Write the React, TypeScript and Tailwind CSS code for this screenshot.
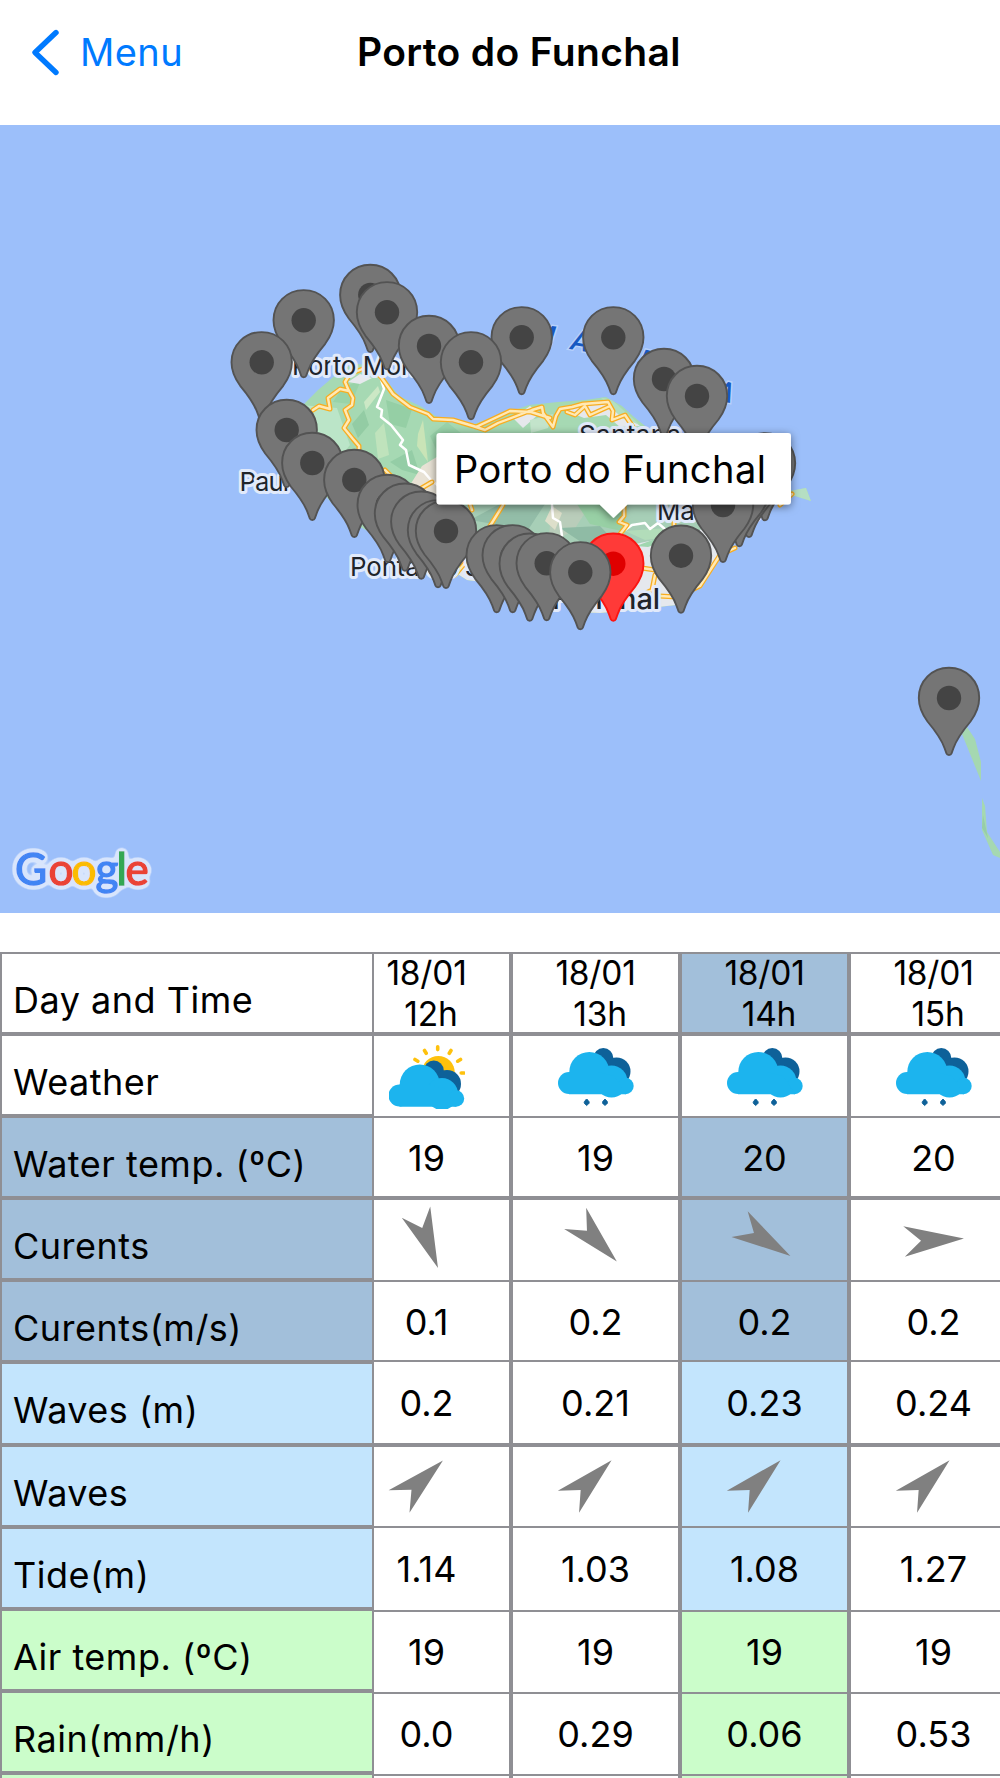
import { clsx } from "clsx";

type Sky = "sun" | "rain";

interface Hour {
  day: string;
  time: string;
  sky: Sky;
  water: string;
  currentDir: number;
  current: string;
  wave: string;
  waveDir: number;
  tide: string;
  air: string;
  rain: string;
  active?: boolean;
}

const hours: Hour[] = [
  { day: "18/01", time: "12h", sky: "sun", water: "19", currentDir: 68.5, current: "0.1", wave: "0.2", waveDir: -43, tide: "1.14", air: "19", rain: "0.0" },
  { day: "18/01", time: "13h", sky: "rain", water: "19", currentDir: 46, current: "0.2", wave: "0.21", waveDir: -44, tide: "1.03", air: "19", rain: "0.29" },
  { day: "18/01", time: "14h", sky: "rain", water: "20", currentDir: 32, current: "0.2", wave: "0.23", waveDir: -44, tide: "1.08", air: "19", rain: "0.06", active: true },
  { day: "18/01", time: "15h", sky: "rain", water: "20", currentDir: -3, current: "0.2", wave: "0.24", waveDir: -44, tide: "1.27", air: "19", rain: "0.53" },
];

const labels = [
  { text: "Day and Time", tone: "bg-white" },
  { text: "Weather", tone: "bg-white" },
  { text: "Water temp. (ºC)", tone: "bg-[#a2bfda]" },
  { text: "Curents", tone: "bg-[#a2bfda]" },
  { text: "Curents(m/s)", tone: "bg-[#a2bfda]" },
  { text: "Waves (m)", tone: "bg-[#c3e5fd]" },
  { text: "Waves", tone: "bg-[#c3e5fd]" },
  { text: "Tide(m)", tone: "bg-[#c3e5fd]" },
  { text: "Air temp. (ºC)", tone: "bg-[#cbfdca]" },
  { text: "Rain(mm/h)", tone: "bg-[#cbfdca]" },
  { text: "", tone: "bg-[#cbfdca]" },
];

// map coordinates of every spot, northernmost first so southern pins overlap them
const pins = [
  [370.3, 295], [387, 312.3], [303.7, 320.3], [521.7, 337.3], [613.3, 337.3],
  [429, 346], [261.7, 362.3], [471, 362.3], [664, 379], [697, 396],
  [286.7, 430], [312.3, 463], [765, 463.3], [354.3, 480], [749, 480], [739.3, 489.3],
  [387.7, 505], [723, 505], [405, 513.7], [421.3, 521.7], [438, 530.3],
  [446, 531], [496.7, 555.3], [512.7, 555.3], [681, 555.7], [529.7, 563.7],
  [546.7, 563.3], [613.3, 563.7], [580.3, 572.3], [949, 698],
];

const Pin = ({ x, y }: { x: number; y: number }) => {
  const selected = x === 613.3 && y === 563.7;
  return (
    <g transform={`translate(${x} ${y})`}>
      <path
        d="M0 -30.2C-17 -30.2 -30.2 -17 -30.2 0C-30.2 9 -27 16 -21.500 23.500C-13.500 33 -8 40 -4.500 50L-2.500 55.500C-1.800 57.500 1.800 57.500 2.500 55.500L4.500 50C8 40 13.500 33 21.500 23.500C27 16 30.2 9 30.2 0C30.2 -17 17 -30.2 0 -30.2Z"
        fill={selected ? "#ff3a38" : "#757575"}
        stroke={selected ? "#fb1512" : "#535353"}
        strokeWidth="1.9"
      />
      <circle r="12.2" fill={selected ? "#df0000" : "#444"} />
    </g>
  );
};

const LAND =
  "M304 404L318 390L338 373L352 364L374 365L384 377L399 396L422 407L445 422L471 425L500 415L529 405L558 402L585 400L606 397L622 406L634 417L660 438L700 455L760 475L790 491L806 488L811 501L795 496L778 500L750 521L728 545L704 582L688 595L676 605L640 609L600 613L578 612L562 601L550 609L522 594L490 583L467 580L445 566L395 545L362 528L332 503L313 483L290 440Z";

const ROADS = [
  "M313 410L319 406L330 409L328 398L340 389L349 391L345 382L350 374L370 366L381 377L393 394L410 407L428 414L433 419L453 420L473 426L485 430L498 423L532 410L542 407L543 413L553 427L556 416L560 409L572 407L583 404L608 402L613 411L612 420L625 415L633 427",
  "M347 387L353 398L352 405L345 410L349 420L344 428L353 439L359 446L359 455",
  "M476 427L510 411L531 412L550 418M567 412L575 415L585 406L590 415L610 406",
  "M385 470L395 480M415 492L432 482M503 505L490 526L482 552M470 504L472 510M624 505L624 516L619 522L627 525L620 534L612 552M617 580L627 572L635 575L642 568L655 570M655 575L652 590L642 595L677 597L700 586L720 555L735 548M674 510L674 526M792 494L780 505M455 575L465 563",
].join("");

const MapIsland = () => (
  <>
    <clipPath id="land">
      <path d={LAND} />
    </clipPath>
    <path d={LAND} fill="#a6d9b3" />
    <g clipPath="url(#land)">
      <path d="M300 405L337 408L350 445L330 470L290 440Z" fill="#bbe5c8" />
      <path d="M342 388L361 380L351 404L333 402Z" fill="#99d3a8" />
      <path d="M352 424L364 410L369 425L358 438Z" fill="#93cca4" />
      <path d="M386 400L412 409L406 428L390 424Z" fill="#95cfa5" />
      <path d="M364 402L378 386L380 392L366 410Z" fill="#cce8c5" />
      <path d="M375 433L384 423L389 455L378 459Z" fill="#bfe3bc" />
      <path d="M418 434L423 420L428 462L417 446Z" fill="#c9e4b7" />
      <path d="M390 462L412 450L420 475L402 470Z" fill="#94cda6" />
      <path d="M430 436L447 422L462 434L441 460Z" fill="#98d2a9" />
      <path d="M410 485L422 466L440 455V500L412 483Z" fill="#e8e2d5" />
      <path d="M348 382L360 374L372 378L360 384Z" fill="#e7e9ee" />
      <path d="M513 418L530 406L540 413L523 428Z" fill="#e6e8ec" />
      <path d="M530 420L553 414L548 428L531 433Z" fill="#c3e4cb" />
      <path d="M564 410L610 402L640 426L620 427L606 415L584 418Z" fill="#e6e8ec" />
      <path d="M600 397L612 400L640 425L622 418Z" fill="#b2dfc0" />
      <path d="M436 500H795V620H436Z" fill="#a7cfb7" />
      <path d="M470 520L500 504H545L528 530L500 525Z" fill="#93bda8" />
      <path d="M552 505L590 505L574 530L548 545Z" fill="#b9cdba" />
      <path d="M577 504H624L626 532L590 524Z" fill="#98d0a5" />
      <path d="M560 528L600 526L618 545L590 548Z" fill="#8fbba5" />
      <path d="M552 506L562 513L555 530L545 521Z" fill="#dddfca" />
      <path d="M625 531L668 528L690 535L645 540Z" fill="#b2ddba" />
      <path d="M440 574L470 545L560 560L640 543L700 530L735 500L780 496L700 620H440Z" fill="#e5e8ed" />
      <path d="M636 546L680 530L665 541L648 547Z" fill="#9fd6af" />
      <path d="M785 488L806 486L812 502L795 497Z" fill="#b5dfc3" />
    </g>

    <g fill="none" strokeLinejoin="round" strokeLinecap="round">
      <path d="M380 376L384 389L377 407L382 410L381 417L391 425L403 440L400 445L406 450L409 465L424 472L431 480L440 487M552 505L553 518L560 522L562 536M625 530L632 525L645 523L650 529L658 523L666 530" stroke="#fff" strokeWidth="2.500" />
      <path d={ROADS} stroke="#f8ad21" strokeWidth="5" />
      <path d={ROADS} stroke="#ffe9b5" strokeWidth="2.400" />
    </g>

    <path d="M962 734L967 727L975 739L981 762V781Z" fill="#a5d8b1" />
    <path d="M982 798L985 806L987 832L1000 852V858L993 855L982 830Z" fill="#a5d8b1" />
    <path d="M983 815L988 838L982 828Z" fill="#97cda8" />
  </>
);

const MapView = () => (
  <svg className="block h-[788px] w-full bg-[#9cbffa]" viewBox="0 125 1000 788">
    <defs>
      <filter id="shadow" x="-10%" y="-20%" width="120%" height="150%">
        <feDropShadow dx="0" dy="2" stdDeviation="4" floodOpacity="0.5" />
      </filter>
      <filter id="halo" x="-10%" y="-30%" width="120%" height="160%">
        <feGaussianBlur in="SourceAlpha" stdDeviation="3" />
        <feComponentTransfer result="wide">
          <feFuncA type="linear" slope="14" intercept="-0.8" />
        </feComponentTransfer>
        <feFlood floodColor="#d8e5fc" />
        <feComposite in2="wide" operator="in" />
        <feMerge>
          <feMergeNode />
          <feMergeNode in="SourceGraphic" />
        </feMerge>
      </filter>
    </defs>
    <MapIsland />

    <g className="font-[Inter]" fill="#20242b" stroke="#e1eafb" strokeWidth="6" strokeLinejoin="round" paintOrder="stroke" fontSize="26">
      <text x="292" y="374.500" textLength="144">Porto Moniz</text>
      <text x="239.500" y="491" textLength="136">Paul do Mar</text>
      <text x="350" y="576" textLength="153">Ponta do Sol</text>
      <text x="579" y="443.500" textLength="102">Santana</text>
      <text x="657" y="520" textLength="104">Machico</text>
      <text x="552" y="608.500" fontSize="29" fontWeight="500" textLength="108">Funchal</text>
    </g>
    <g className="font-[Roboto] font-medium italic" fill="#1659c2" stroke="#b7d1fb" strokeWidth="3" paintOrder="stroke" fontSize="28">
      <text transform="translate(530 343) rotate(8)">M</text>
      <text transform="translate(570 349) rotate(10)">A</text>
      <text transform="translate(637 368) rotate(14)">D</text>
      <text transform="translate(714 399) rotate(14)">A</text>
    </g>

    {pins.map(([x, y]) => (
      <Pin key={`${x}-${y}`} x={x} y={y} />
    ))}

    <g filter="url(#shadow)">
      <path d="M439.500 433H788a3 3 0 0 1 3 3V501.500a3 3 0 0 1-3 3H627.500L613.500 518L599.500 504.500H439.500a3 3 0 0 1-3-3V436a3 3 0 0 1 3-3Z" fill="#fff" />
    </g>
    <text className="font-[Inter]" x="454" y="482.500" fontSize="38" textLength="312">
      Porto do Funchal
    </text>

    <text className="font-[Lato]" fontSize="44" y="884.500" strokeWidth="1.500" filter="url(#halo)">
      <tspan x="15" fill="#4285f4" stroke="#4285f4">G</tspan>
      <tspan x="48.500" fill="#ea4335" stroke="#ea4335">o</tspan>
      <tspan x="71.500" fill="#fbbc05" stroke="#fbbc05">o</tspan>
      <tspan x="95.500" fill="#4285f4" stroke="#4285f4">g</tspan>
      <tspan x="116.500" fill="#34a853" stroke="#34a853">l</tspan>
      <tspan x="125.500" fill="#ea4335" stroke="#ea4335">e</tspan>
    </text>
  </svg>
);

const Clouds = () => (
  <>
    <g fill="#0e6199">
      <circle cx="45.300" cy="12" r="10" />
      <circle cx="58.500" cy="25.500" r="14" />
    </g>
    <g fill="#1cb4ee">
      <circle cx="11" cy="37" r="11" />
      <circle cx="31.300" cy="26" r="20" />
      <circle cx="53.500" cy="35.500" r="16" />
      <circle cx="67.500" cy="40" r="8.200" />
      <path d="M11 26H40L56 30L68 48.200H11Z" />
    </g>
  </>
);

const WeatherIcon = ({ sky }: { sky: Sky }) => (
  <svg className="mt-[9px] h-[64px] w-[76px]" viewBox="0 0 76 64">
    {sky === "sun" ? (
      <>
        <circle cx="49.300" cy="27.500" r="16.500" fill="#fec10d" />
        <path
          d="M48.700 1.800V4.600M35.500 5.500L37.200 8.300M62 5.500L60.300 8.300M26 14.500L28.800 16.200M71.500 14.500L68.700 16.200M72.200 28H75"
          stroke="#fec10d"
          strokeWidth="3.600"
          strokeLinecap="round"
        />
        <g transform="translate(-0.5 13.500)">
          <Clouds />
        </g>
      </>
    ) : (
      <g transform="translate(0 1)">
        <Clouds />
        <path d="M28.700 53C29.500 54 31.200 55 31.200 56.500C31.200 58 29.500 58.500 28.700 59.500C27.900 58.500 26.200 58 26.200 56.500C26.200 55 27.900 54 28.700 53ZM47 53C47.800 54 49.500 55 49.500 56.500C49.500 58 47.800 58.500 47 59.500C46.200 58.500 44.500 58 44.500 56.500C44.500 55 46.200 54 47 53Z" fill="#0e6199" stroke="#0e6199" strokeLinejoin="round" />
      </g>
    )}
  </svg>
);

const Arrow = ({ angle, className }: { angle: number; className?: string }) => (
  <svg className={clsx("h-[72px] w-[72px]", className)} viewBox="-36 -36 72 72">
    <path d="M30 0L-30 15.300L-13 0L-30 -15.300Z" fill="#808080" transform={`rotate(${angle})`} />
  </svg>
);

const cell = "flex shrink-0 justify-center overflow-hidden border-[#8f8f94] leading-[81px]";

const HourColumn = ({ hour }: { hour: Hour }) => {
  const deep = hour.active && "bg-[#a2bfda]";
  const sea = hour.active && "bg-[#c3e5fd]";
  const air = hour.active && "bg-[#cbfdca]";
  return (
    <div className="flex w-[169px] shrink-0 flex-col border-x-[2.5px] border-t-2 border-[#8f8f94] text-[36px]">
      <div className={clsx("h-[82px] shrink-0 border-b-4 border-[#8f8f94] text-center text-[33.5px] leading-[41px] tracking-[-0.2px]", deep)}>
        <div className="-mt-px">{hour.day}</div>
        <div className="pl-[9px]">{hour.time}</div>
      </div>
      <div className={clsx(cell, "h-[82px] border-b-2")}>
        <WeatherIcon sky={hour.sky} />
      </div>
      <div className={clsx(cell, "h-[82px] border-b-4", deep)}>{hour.water}</div>
      <div className={clsx(cell, "h-[82px] border-b-2 pt-[4px]", deep)}>
        <Arrow angle={hour.currentDir} />
      </div>
      <div className={clsx(cell, "h-[80px] border-b-2", deep)}>{hour.current}</div>
      <div className={clsx(cell, "h-[85px] border-b-4 leading-[82px]", sea)}>{hour.wave}</div>
      <div className={clsx(cell, "h-[81px] border-b-2", sea)}>
        <Arrow angle={hour.waveDir} className="-mt-[2px] mr-[12px]" />
      </div>
      <div className={clsx(cell, "h-[84px] border-b-2 leading-[83px]", sea)}>{hour.tide}</div>
      <div className={clsx(cell, "h-[82px] border-b-2", air)}>{hour.air}</div>
      <div className={clsx(cell, "h-[82px] border-b-2", air)}>{hour.rain}</div>
      <div className={clsx(cell, "h-[2px]", air)} />
    </div>
  );
};

const App = () => {
  return (
    <div className="flex h-[1778px] w-[1000px] flex-col overflow-hidden bg-white font-[Inter,sans-serif] text-black">
      <header className="grid h-[125px] shrink-0 grid-cols-[359px_1fr] items-start pt-[27px]">
        <button className="flex items-center pl-[31px] text-[38px] leading-[50px] text-[#007aff]">
          <svg className="h-[50px] w-[30px]" viewBox="0 0 30 50" fill="none">
            <path d="M25 5.500L4 25.500L25 45.500" stroke="currentColor" strokeWidth="5.400" strokeLinecap="round" strokeLinejoin="round" />
          </svg>
          <span className="pl-[19px] tracking-[0.4px]">Menu</span>
        </button>
        <h1 className="-ml-[2px] text-[39px] leading-[50px] font-semibold tracking-[0.35px] whitespace-nowrap">Porto do Funchal</h1>
      </header>

      <div className="shrink-0">
        <MapView />
      </div>

      <div className="mt-[39px] flex">
        <div className="z-10 w-[374px] shrink-0 border-x-2 border-t-2 border-[#8f8f94]">
          {labels.map(({ text, tone }, i) => (
            <div
              key={i}
              className={clsx("h-[82.1px] overflow-hidden border-b-4 border-[#8f8f94] pt-[14px] pl-[11px] text-[36px] leading-[64px] tracking-[0.5px] whitespace-nowrap", tone)}
            >
              {text}
            </div>
          ))}
        </div>
        <div className="-ml-[32px] flex">
          {hours.map((hour) => (
            <HourColumn key={hour.time} hour={hour} />
          ))}
        </div>
      </div>
    </div>
  );
};

export default App;
